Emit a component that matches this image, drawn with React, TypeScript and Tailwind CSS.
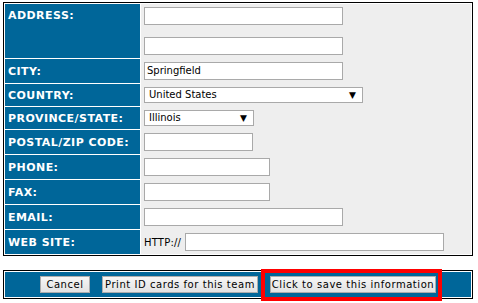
import type { ReactNode } from 'react'

const font = { fontFamily: '"DejaVu Sans", Verdana, sans-serif' }

function TextBox({ w, value }: { w: string; value?: string }) {
  return (
    <div className={`${w} h-[18px] bg-white border border-[#a9a9a9] pl-[2px] text-[10px] leading-[16px] text-black`}>
      {value}
    </div>
  )
}

function Dropdown({ w, value }: { w: string; value: string }) {
  return (
    <div className={`${w} h-[16px] bg-white border border-[#a9a9a9] pl-[4px] pr-[6px] flex items-center justify-between text-[10px] text-black`}>
      <span className="leading-[14px]">{value}</span>
      <span className="text-[9px] leading-none">▼</span>
    </div>
  )
}

function Row({ label, h, last, top, children }: { label: string; h: string; last?: boolean; top?: boolean; children: ReactNode }) {
  return (
    <div className={`flex gap-px ${h}`}>
      <div
        className={`w-[135px] shrink-0 bg-[#006699] px-[3px] flex ${top ? 'items-start pt-[5px]' : 'items-center'} ${last ? '' : 'border-b border-white'}`}
      >
        <span className="text-white font-bold text-[11px] leading-[13px] tracking-[0.45px]">{label}</span>
      </div>
      <div className="flex-1 bg-[#eeeeee] px-[3px] pt-[3px]">{children}</div>
    </div>
  )
}

function Btn({ w, children }: { w: string; children: ReactNode }) {
  return (
    <button className={`${w} h-[17px] border border-[#acacac] bg-gradient-to-b from-[#f6f6f6] to-[#e3e3e3] text-[10px] leading-[15px] tracking-[0.55px] text-black text-center whitespace-nowrap`}>
      {children}
    </button>
  )
}

export default function App() {
  return (
    <div className="relative w-[478px] h-[303px] bg-white pt-[2px] pl-[3px]" style={font}>
      <div className="w-[470px] border border-black bg-white p-px">
        <Row label="ADDRESS:" h="h-[55px]" top>
          <TextBox w="w-[199px]" />
          <div className="mt-[12px]">
            <TextBox w="w-[199px]" />
          </div>
        </Row>
        <Row label="CITY:" h="h-[25px]">
          <TextBox w="w-[199px]" value="Springfield" />
        </Row>
        <Row label="COUNTRY:" h="h-[23px]">
          <Dropdown w="w-[219px]" value="United States" />
        </Row>
        <Row label="PROVINCE/STATE:" h="h-[23px]">
          <Dropdown w="w-[110px]" value="Illinois" />
        </Row>
        <Row label="POSTAL/ZIP CODE:" h="h-[25px]">
          <TextBox w="w-[109px]" />
        </Row>
        <Row label="PHONE:" h="h-[25px]">
          <TextBox w="w-[126px]" />
        </Row>
        <Row label="FAX:" h="h-[25px]">
          <TextBox w="w-[126px]" />
        </Row>
        <Row label="EMAIL:" h="h-[25px]">
          <TextBox w="w-[199px]" />
        </Row>
        <Row label="WEB SITE:" h="h-[24px]" last>
          <div className="flex items-center">
            <span className="text-[10px] text-black w-[41px] tracking-[0.2px]">HTTP://</span>
            <TextBox w="w-[259px]" />
          </div>
        </Row>
      </div>

      <div className="mt-[14px] w-[470px] border border-black bg-white p-px">
        <div className="h-[25px] bg-[#006699] flex items-center justify-center gap-[12px]">
          <Btn w="w-[50px]">Cancel</Btn>
          <Btn w="w-[156px]">Print ID cards for this team</Btn>
          <Btn w="w-[166px]">Click to save this information</Btn>
        </div>
      </div>

      <div className="absolute left-[261px] top-[269px] w-[181px] h-[32px] border-4 border-[#ff0000]" />
    </div>
  )
}
